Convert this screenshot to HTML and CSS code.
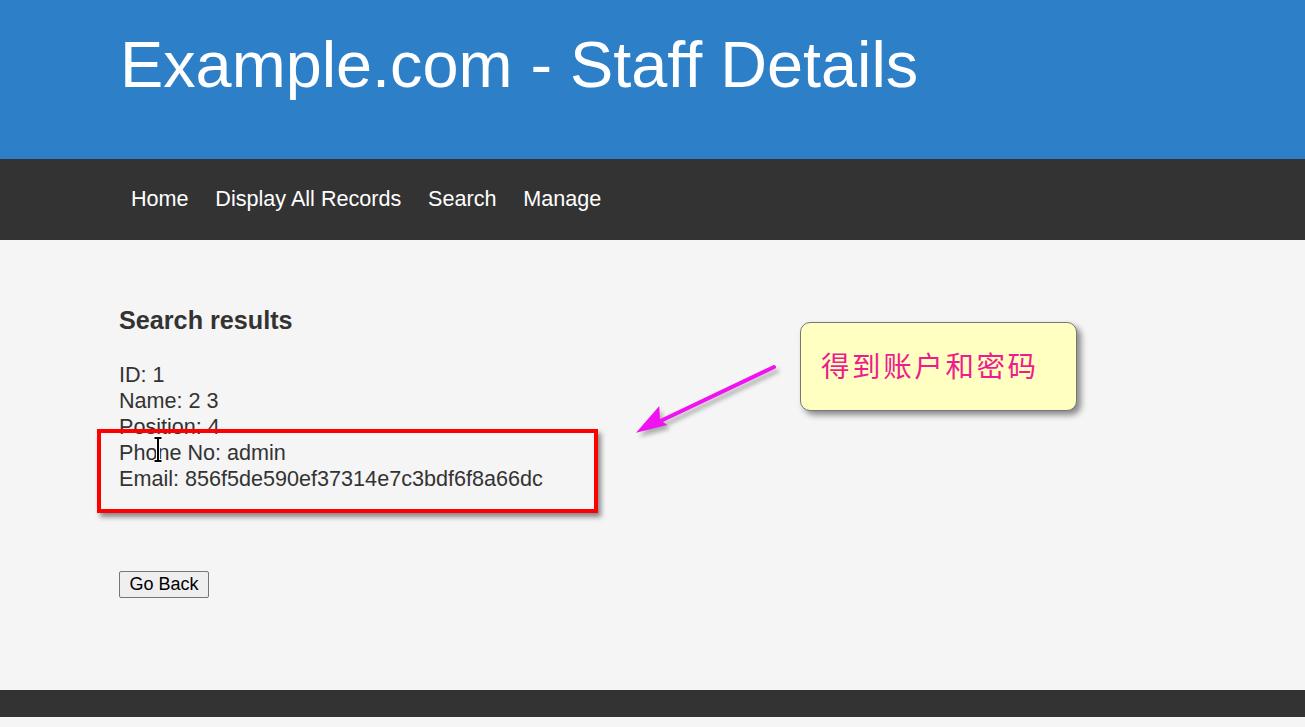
FILE: index.html
```html
<!DOCTYPE html>
<html lang="en">
<head>
<meta charset="utf-8">
<title>Example.com - Staff Details</title>
<link rel="stylesheet" href="styles.css">
</head>
<body>
<header class="site-header">
  <div class="container">
    <h1 class="site-title">Example.com - Staff Details</h1>
  </div>
</header>
<nav class="site-nav">
  <div class="container nav-links">
    <a href="#">Home</a>
    <a href="#">Display All Records</a>
    <a href="#">Search</a>
    <a href="#">Manage</a>
  </div>
</nav>
<main class="content">
  <div class="container">
    <h3 class="results-title">Search results</h3>
    <div class="record">
      <div>ID: 1</div>
      <div>Name: 2 3</div>
      <div>Position: 4</div>
      <div>Phone No: admin</div>
      <div>Email: 856f5de590ef37314e7c3bdf6f8a66dc</div>
    </div>
    <button class="back-btn" type="button">Go Back</button>
  </div>
</main>
<footer class="site-footer"></footer>

<div class="highlight-box"></div>
<div class="note-box">得到账户和密码</div>
<svg class="note-arrow" width="170" height="100" viewBox="0 0 170 100">
  <defs>
    <filter id="ashadow" x="-20%" y="-20%" width="140%" height="140%">
      <feGaussianBlur stdDeviation="2"/>
    </filter>
  </defs>
  <g transform="translate(3,4)" opacity="0.45" filter="url(#ashadow)">
    <line x1="154" y1="17" x2="26" y2="78" stroke="#555" stroke-width="4" stroke-linecap="round"/>
    <polygon points="16,83 39.3,56 40,70 47.3,75" fill="#555"/>
  </g>
  <line x1="154" y1="17" x2="30" y2="76" stroke="#f012f0" stroke-width="4" stroke-linecap="round"/>
  <polygon points="16,82.7 39.3,56 40,70 47.3,75" fill="#f012f0"/>
</svg>
<svg class="text-cursor" width="12" height="28" viewBox="0 0 12 28">
  <path d="M2 2h8M2 25h8M6 2v23" fill="none" stroke="#fff" stroke-width="4"/>
  <path d="M2.5 2h7M2.5 25h7M6 2v23" fill="none" stroke="#000" stroke-width="2"/>
</svg>
</body>
</html>
```

FILE: styles.css
```css
html, body {
  margin: 0;
  padding: 0;
}

body {
  background: #f5f5f5;
  font-family: "Liberation Sans", Arial, sans-serif;
  color: #333;
  position: relative;
  min-height: 727px;
}

.container {
  padding-left: 119px;
}

.site-header {
  background: #2d80c8;
  height: 159px;
  box-sizing: border-box;
  padding-top: 27px;
}

.site-title {
  margin: 0 0 0 1px;
  font-size: 64.8px;
  font-weight: normal;
  color: #fff;
}

.site-nav {
  background: #333;
  height: 81px;
}

.nav-links {
  display: flex;
  align-items: center;
  height: 79px;
}

.nav-links a {
  color: #fff;
  text-decoration: none;
  font-size: 21.6px;
  padding: 0 13.4px;
}

.nav-links a:first-child {
  margin-left: -1.5px;
}

.content {
  height: 450px;
  box-sizing: border-box;
  padding-top: 66px;
}

.results-title {
  margin: 0;
  font-size: 25.2px;
  font-weight: bold;
  color: #333;
}

.record {
  margin-top: 27px;
  font-size: 21.6px;
  line-height: 26px;
  color: #333;
}

.back-btn {
  margin-top: 79px;
  font-family: "Liberation Sans", Arial, sans-serif;
  font-size: 18px;
  line-height: 21px;
  color: #000;
  background: #efefef;
  border: 1px solid #767676;
  border-radius: 2px;
  padding: 2px 9.5px;
  height: 27px;
  box-sizing: border-box;
}

.site-footer {
  background: #333;
  height: 27px;
}

/* annotations overlaid on the screenshot */
.highlight-box {
  position: absolute;
  left: 97px;
  top: 429px;
  width: 501px;
  height: 84px;
  box-sizing: border-box;
  border: 4px solid #ff0000;
  box-shadow: 3px 4px 5px rgba(0, 0, 0, 0.45);
}

.note-box {
  position: absolute;
  left: 800px;
  top: 322px;
  width: 277px;
  height: 89px;
  box-sizing: border-box;
  background: #ffffc2;
  border: 1px solid #777;
  border-radius: 10px;
  box-shadow: 4px 4px 6px rgba(0, 0, 0, 0.45);
  padding: 25px 0 0 20px;
  font-family: "Noto Sans CJK SC", "Noto Sans CJK JP", sans-serif;
  font-size: 28.5px;
  line-height: 34px;
  letter-spacing: 2.6px;
  color: #ee1c8c;
}

.note-arrow {
  position: absolute;
  left: 620px;
  top: 350px;
  overflow: visible;
}

.text-cursor {
  position: absolute;
  left: 152px;
  top: 436px;
}
```
